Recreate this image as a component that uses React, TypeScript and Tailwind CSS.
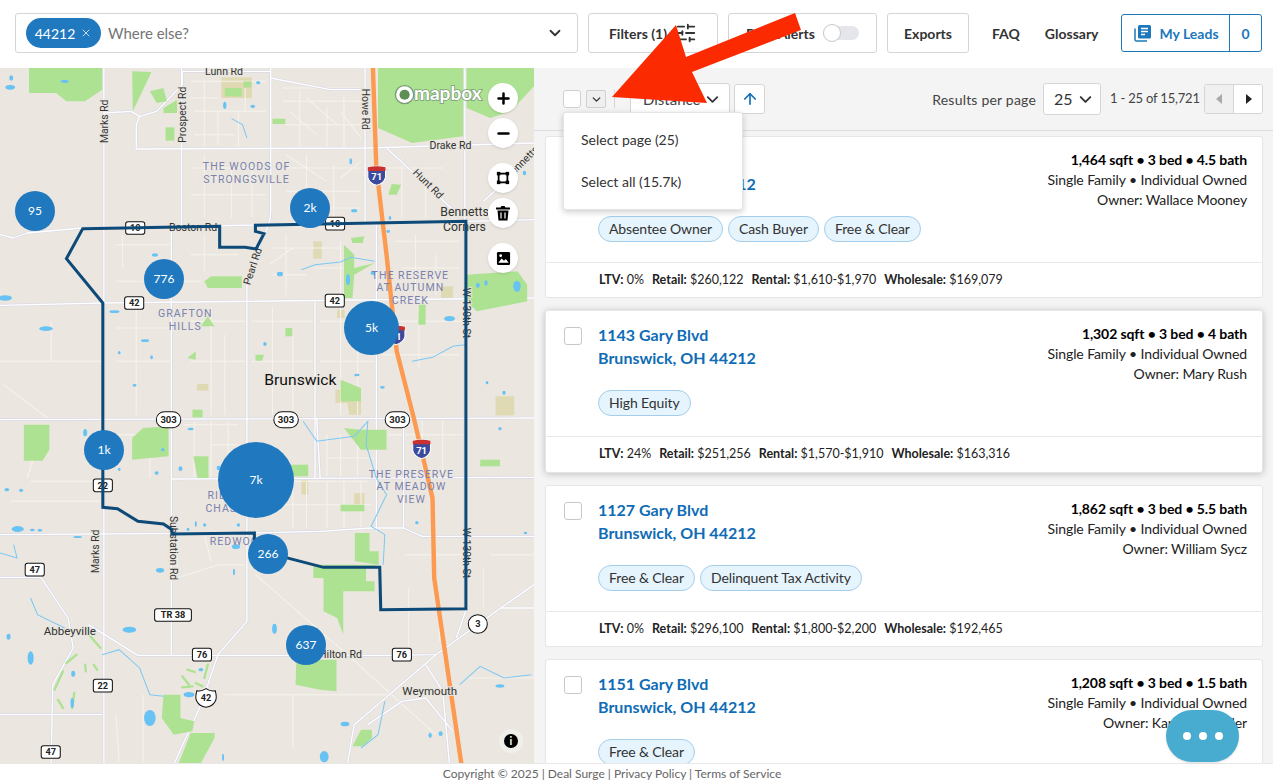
import React from 'react';
import { ChevronDown, X, SlidersHorizontal, Plus, Minus, ArrowUp } from 'lucide-react';

const listings = [
  {
    street: '1119 Gary Blvd',
    city: 'Brunswick, OH 44212',
    size: '1,464 sqft • 3 bed • 4.5 bath',
    owner: 'Wallace Mooney',
    tags: ['Absentee Owner', 'Cash Buyer', 'Free & Clear'],
    ltv: '0%',
    retail: '$260,122',
    rental: '$1,610-$1,970',
    wholesale: '$169,079',
  },
  {
    street: '1143 Gary Blvd',
    city: 'Brunswick, OH 44212',
    size: '1,302 sqft • 3 bed • 4 bath',
    owner: 'Mary Rush',
    tags: ['High Equity'],
    ltv: '24%',
    retail: '$251,256',
    rental: '$1,570-$1,910',
    wholesale: '$163,316',
    raised: true,
  },
  {
    street: '1127 Gary Blvd',
    city: 'Brunswick, OH 44212',
    size: '1,862 sqft • 3 bed • 5.5 bath',
    owner: 'William Sycz',
    tags: ['Free & Clear', 'Delinquent Tax Activity'],
    ltv: '0%',
    retail: '$296,100',
    rental: '$1,800-$2,200',
    wholesale: '$192,465',
  },
  {
    street: '1151 Gary Blvd',
    city: 'Brunswick, OH 44212',
    size: '1,208 sqft • 3 bed • 1.5 bath',
    owner: 'Karen Schindler',
    tags: ['Free & Clear'],
    ltv: '0%',
    retail: '$180,400',
    rental: '$1,300-$1,600',
    wholesale: '$117,260',
  },
];

const clusters = [
  { label: '95', cls: 'left-[15px] top-[123px] w-[40px] h-[40px]' },
  { label: '2k', cls: 'left-[290px] top-[120px] w-[40px] h-[40px]' },
  { label: '776', cls: 'left-[144px] top-[191px] w-[40px] h-[40px]' },
  { label: '5k', cls: 'left-[344px] top-[233px] w-[55px] h-[54px]' },
  { label: '1k', cls: 'left-[84px] top-[362px] w-[40px] h-[40px]' },
  { label: '7k', cls: 'left-[218px] top-[374px] w-[76px] h-[76px]' },
  { label: '266', cls: 'left-[248px] top-[466px] w-[40px] h-[40px]' },
  { label: '637', cls: 'left-[286px] top-[557px] w-[40px] h-[40px]' },
];

// everything inside the map drawing is in a 1568 x 2085 space (lower half shifted by 1050)
const majorRoads = [
  'M305 0V2090',
  'M533 0V470L503 480V1050V1760',
  'M795 0V430Q795 470 770 510L725 650V1660L640 1760L590 1910L510 2090',
  'M1072 0V470',
  'M1105 470V1390',
  'M925 700V1230',
  'M1365 0V1620',
  'M0 500L40 510L80 495L240 480L1370 460L1568 455',
  'M400 243L1075 240L1568 225',
  'M400 243V170L410 145L385 130L305 135M410 145L460 130L535 50V10H795M795 30L970 65H1075',
  'M0 712L300 705L1568 690',
  'M0 1055L1568 1050',
  'M505 1233L1568 1228',
  'M0 1400L720 1395L940 1390L1090 1380H1185L1240 1405H1568',
  'M260 1670L405 1762H1130L1280 1760L1470 1620H1568',
  'M1020 2090L1040 1970L1280 1760',
  'M0 1528H120L200 1650L215 1740L155 1850L150 2090',
  'M1568 1550L1470 1620',
  'M1370 1620L1340 1710',
  'M0 1940H300',
  'M1135 240L1330 425M1420 400L1568 260',
  'M1185 1050V1380',
  'M930 1050L940 1230',
  'M1250 1790L1300 1870L1320 2090M1250 1890L1330 1990',
  'M1080 1970L1180 1900L1250 1890',
];

const minorRoads =
  'M560 40H780M560 90H640M570 130H780M600 40V240M700 130V240M830 100H1060M880 70V240M960 120V240M1010 80V240M840 170H1060' +
  'M560 300H780M600 260V450M680 300V450M560 380H780M840 300H1060M900 260V450M980 290V450M840 370H1060M1180 270V450M1250 320V450' +
  'M340 530H500M360 500V600M560 560H700M600 500V610M800 540H1000M840 500V680M920 600H1050M1000 520V680M1160 520H1350M1220 500V680' +
  'M340 780H500M400 720V1040M340 880H500M560 760H720M620 720V1040M560 880H720M660 800V1040M740 760H920M800 720V1040M740 880H920M860 800V1040' +
  'M940 760H1100M1000 720V1040M940 880H1100M1050 800V1040M1120 760H1360M1230 720V900M1120 860H1350M150 760V880H300M0 880H190M10 950L140 1050' +
  'M540 1070H700M570 1060V1230M620 1060V1230M670 1060V1230M830 1240H1080M860 1240V1380M900 1240V1380M960 1240V1380M1010 1240V1380M1060 1240V1380M830 1310H1090' +
  'M340 1100H500M90 1240H300M120 1100L80 1230M30 1300H300M520 1530L640 1490H720M520 1400V1500M750 1520L1020 1760L1280 2000' +
  'M600 1400L620 1480M1190 1460H1360M1200 1560V1740M1290 1640V1720M660 1880H1150M860 1880V2040M420 1880V2090M340 1940L350 2080' +
  'M1370 1830H1568M1440 1460H1568M1420 1500V1620' +
  'M830 60H1060M850 130L930 200M900 90L990 170M1000 130L1060 210M570 200H690M640 130V230M720 60V130' +
  'M840 260L960 340M1000 330L1060 280M1120 300H1300M620 330H760M740 300V450M840 420H1060' +
  'M790 590L860 540M800 620H900M1180 600H1350M1280 560V680M450 640H590M340 640H420' +
  'M440 1100V1230M620 1130H700M1140 1100H1360M1240 1060V1230M1300 1060V1230M960 1100V1230M1000 1100V1230M1050 1130V1230M960 1170H1100';

const golf =
  'M265 1705L295 1740M225 1760L195 1785M185 1810L160 1865M170 1895L185 1920M218 1875L212 1920M250 1790L252 1810M275 1790L285 1805' +
  'M610 1790L600 1830M550 1805L572 1812M535 1825L555 1850M535 1858L565 1855M575 1845L595 1855';

const parks = [
  'M85 0H300V65L250 100H195L165 75H85Z',
  'M388 10L445 12L390 130Z',
  'M440 70L480 60L490 100L460 105Z',
  'M480 120L520 95V135H480Z',
  'M1110 0H1360V205L1210 225L1110 180Z',
  'M1370 0H1568V55L1500 130L1440 150L1370 120Z',
  'M660 60H710V85H660Z',
  'M715 40H738V58H715Z',
  'M800 152H838V168H800Z',
  'M486 178H512V218H486Z',
  'M1140 380L1150 348L1178 350L1165 380Z',
  'M1030 510L1070 505L1065 525L1035 525Z',
  'M600 640L620 625H710V660H610Z',
  'M1010 530L1040 560V600L1100 585L1040 620L1035 690H1010Z',
  'M1370 620L1520 610L1548 650V700L1400 730L1370 700Z',
  'M1230 710L1250 710L1250 770L1228 770Z',
  'M590 775L610 745L630 775Z',
  'M838 780H858V805H838Z',
  'M750 860L775 860L770 878H750Z',
  'M550 870L575 850V875Z',
  'M1000 935L1060 960V1000H1000Z',
  'M565 1025H595V1048H565Z',
  'M70 1070H145V1145L125 1178H70Z',
  'M388 1110L420 1080L495 1075V1165L388 1175Z',
  'M568 1165H612V1230H580Z',
  'M855 1190H905V1225H855Z',
  'M1010 1080L1060 1085H1135V1145H1060Z',
  'M1410 1175H1468V1195H1410Z',
  'M1000 1310H1070V1330H1000Z',
  'M1042 1395H1085V1450H1112V1490H920V1530H950V1630L990 1650L1008 1700V1570H1100V1540H1075V1500L1112 1490L1042 1480Z',
  'M870 1775H988V1870L940 1865L868 1850Z',
  'M480 1880H530V1950L570 1960L565 1990L510 2000L475 1950Z',
  'M525 2085L560 1995H630V2010L590 2085Z',
  'M1035 2035L1060 1985H1092V2010L1065 2035Z',
];

const tans = [
  'M650 28H740V90H650Z',
  'M920 520H945V572H920Z',
  'M1295 655H1330V690H1295Z',
  'M990 725H1012V750H990Z',
  'M578 948H612V968H578Z',
  'M985 965H1060V1040H1025L1020 1005H985Z',
  'M1455 985H1510V1042H1455Z',
  'M885 1235H905V1280H885Z',
  'M1040 1275H1070V1310H1040Z',
];

const waters: [number, number, number, number][] = [
  [33, 30, 6, 8], [30, 58, 14, 7], [190, 40, 12, 5], [660, 112, 5, 11], [742, 115, 7, 5], [758, 44, 6, 5],
  [1030, 280, 4, 9], [1040, 428, 9, 5], [1140, 490, 5, 5], [1145, 450, 4, 6], [455, 561, 9, 5], [15, 690, 20, 8],
  [336, 731, 15, 4], [135, 782, 20, 7], [426, 818, 12, 4], [350, 854, 4, 5], [445, 868, 4, 6], [822, 618, 9, 7],
  [1022, 635, 6, 16], [1095, 615, 7, 6], [1403, 652, 6, 8], [1427, 645, 5, 8], [1518, 655, 11, 17], [1320, 752, 16, 8],
  [778, 828, 5, 6], [395, 952, 6, 4], [1048, 921, 8, 4], [1123, 958, 7, 4], [1430, 944, 4, 5], [1480, 974, 5, 6],
  [1540, 315, 5, 7], [20, 1265, 7, 5], [62, 1267, 6, 5], [250, 1094, 6, 11], [350, 1204, 4, 5], [460, 1215, 6, 5],
  [530, 1202, 6, 7], [478, 1145, 5, 5], [642, 1200, 6, 7], [560, 1083, 9, 4], [52, 1383, 18, 9], [95, 1386, 7, 4],
  [117, 1387, 7, 4], [228, 1407, 13, 3], [575, 1368, 3, 9], [601, 1371, 5, 5], [552, 1384, 4, 5], [700, 1371, 5, 5],
  [693, 1436, 12, 7], [470, 1507, 12, 7], [687, 1512, 3, 10], [806, 1682, 7, 15], [380, 1685, 20, 9], [25, 1706, 6, 9],
  [90, 1770, 9, 20], [215, 1817, 6, 9], [212, 1905, 5, 15], [440, 1950, 17, 24], [590, 1805, 7, 5], [555, 1880, 16, 8],
  [1013, 1968, 13, 7], [1263, 2002, 5, 8], [1294, 1997, 6, 7], [952, 2066, 13, 17], [1468, 1854, 13, 5], [655, 2068, 3, 11],
  [1224, 1364, 5, 5], [1543, 1395, 5, 4], [1468, 1082, 5, 5],
];

const streams = [
  'M680 152L712 170L725 210',
  'M885 605L925 590L1000 582L1030 568L1100 580',
  'M1210 880L1270 868L1330 835L1365 830',
  'M890 1060L930 1120L1040 1105L1080 1060L1075 1130L1105 1230L1135 1280L1090 1375L1130 1400L1125 1490',
  'M0 1455L50 1470L40 1430M90 1590L110 1640L190 1680M300 1760L350 1745L410 1800L440 1880L480 1885',
  'M1130 1900L1110 2000L1060 2040M1350 1850L1410 1795L1480 1830L1560 1820',
];

const shields: [string, number, number, number][] = [
  ['10', 397, 480, 56], ['10', 984, 467, 56], ['42', 394, 705, 56], ['42', 983, 698, 56],
  ['22', 302, 1252, 56], ['22', 302, 1853, 56], ['47', 102, 1505, 56], ['47', 149, 2052, 56],
  ['TR 38', 508, 1641, 108], ['76', 593, 1760, 56], ['76', 1180, 1760, 56],
];

function RoadPaths() {
  return (
    <>
      <path d={minorRoads} fill="none" stroke="#f6f3ed" strokeWidth="3" />
      {majorRoads.map((d, i) => (
        <path key={i} d={d} fill="none" stroke="#d9d9e6" strokeWidth="8" strokeLinejoin="round" />
      ))}
      {majorRoads.map((d, i) => (
        <path key={i} d={d} fill="none" stroke="#ffffff" strokeWidth="4" strokeLinejoin="round" />
      ))}
    </>
  );
}

function Interstate({ x, y }: { x: number; y: number }) {
  return (
    <g transform={`translate(${x} ${y})`}>
      <path d="M-26 -24Q0 -30 26 -24V6Q22 24 0 30Q-22 24 -26 6Z" fill="#3c4a9e" stroke="#fff" strokeWidth="3" />
      <path d="M-26 -24Q0 -30 26 -24V-13H-26Z" fill="#c9312f" />
      <text x="0" y="15" textAnchor="middle" fontSize="28" fontWeight="700" fill="#fff" fontFamily="Roboto, sans-serif">
        71
      </text>
    </g>
  );
}

function Oval({ x, y, label }: { x: number; y: number; label: string }) {
  return (
    <g>
      <rect x={x - 36} y={y - 24} width="72" height="48" rx="24" fill="#fff" stroke="#111" strokeWidth="3" />
      <text x={x} y={y + 10} textAnchor="middle" fontSize="28" fontWeight="700" fill="#222" fontFamily="Roboto, sans-serif">
        {label}
      </text>
    </g>
  );
}

function Label({
  x,
  y,
  size = 31,
  fill = '#333',
  rotate,
  spacing,
  children,
}: {
  x: number;
  y: number;
  size?: number;
  fill?: string;
  rotate?: number;
  spacing?: number;
  children: string;
}) {
  return (
    <text
      x={x}
      y={y}
      textAnchor="middle"
      fontSize={size}
      fill={fill}
      letterSpacing={spacing}
      fontFamily="Roboto, sans-serif"
      transform={rotate ? `rotate(${rotate} ${x} ${y})` : undefined}
    >
      {children}
    </text>
  );
}

function MapArt() {
  return (
    <svg viewBox="0 0 1568 2085" preserveAspectRatio="none" className="w-full h-full block">
      <rect width="1568" height="2085" fill="#ebe7e0" />
      {tans.map((d, i) => (
        <path key={i} d={d} fill="#dfd9b4" />
      ))}
      <RoadPaths />
      {parks.map((d, i) => (
        <path key={i} d={d} fill="#aee293" />
      ))}
      <path d={golf} fill="none" stroke="#aee293" strokeWidth="7" strokeLinecap="round" />
      {streams.map((d, i) => (
        <path key={i} d={d} fill="none" stroke="#7cc8f3" strokeWidth="3" />
      ))}
      {waters.map(([cx, cy, rx, ry], i) => (
        <ellipse key={i} cx={cx} cy={cy} rx={rx} ry={ry} fill="#69c2f4" />
      ))}
      <path d="M1095 0L1105 300L1135 560L1165 850L1215 1050L1270 1290L1275 1530L1355 2090" fill="none" stroke="#fb9a50" strokeWidth="13" />

      <g stroke="#e9e6df" strokeWidth="6" style={{ paintOrder: 'stroke' }}>
        <Label x={658} y={22}>Lunn Rd</Label>
        <Label x={317} y={160} rotate={-90}>Marks Rd</Label>
        <Label x={545} y={140} rotate={-90}>Prospect Rd</Label>
        <Label x={1062} y={124} rotate={90}>Howe Rd</Label>
        <Label x={1323} y={244}>Drake Rd</Label>
        <Label x={1250} y={355} rotate={45}>Hunt Rd</Label>
        <Label x={1540} y={290} rotate={-45}>Bennetts</Label>
        <Label x={567} y={488}>Boston Rd</Label>
        <Label x={752} y={598} rotate={-72}>Pearl Rd</Label>
        <Label x={1360} y={735} rotate={90}>W 130th St</Label>
        <Label x={1360} y={1455} rotate={90}>W 130th St</Label>
        <Label x={292} y={1450} rotate={-90}>Marks Rd</Label>
        <Label x={498} y={1440} rotate={90}>Substation Rd</Label>
        <Label x={1000} y={1770}>Hilton Rd</Label>
        <Label x={1364} y={445} size={36}>Bennetts</Label>
        <Label x={1364} y={490} size={36}>Corners</Label>
        <Label x={205} y={1700} size={34}>Abbeyville</Label>
        <Label x={1262} y={1882} size={34}>Weymouth</Label>
        <Label x={882} y={952} size={46} fill="#111">Brunswick</Label>
      </g>

      <g>
        <Label x={724} y={306} fill="#7a82ad" spacing={3}>THE WOODS OF</Label>
        <Label x={724} y={344} fill="#7a82ad" spacing={3}>STRONGSVILLE</Label>
        <Label x={1205} y={632} fill="#7a82ad" spacing={3}>THE RESERVE</Label>
        <Label x={1205} y={670} fill="#7a82ad" spacing={3}>AT AUTUMN</Label>
        <Label x={1205} y={708} fill="#7a82ad" spacing={3}>CREEK</Label>
        <Label x={544} y={747} fill="#7a82ad" spacing={3}>GRAFTON</Label>
        <Label x={544} y={785} fill="#7a82ad" spacing={3}>HILLS</Label>
        <Label x={1208} y={1229} fill="#7a82ad" spacing={3}>THE PRESERVE</Label>
        <Label x={1208} y={1267} fill="#7a82ad" spacing={3}>AT MEADOW</Label>
        <Label x={1208} y={1305} fill="#7a82ad" spacing={3}>VIEW</Label>
        <Label x={660} y={1294} fill="#7a82ad" spacing={3}>RIDGE</Label>
        <Label x={660} y={1332} fill="#7a82ad" spacing={3}>CHASE</Label>
        <Label x={700} y={1432} fill="#7a82ad" spacing={3}>REDWOOD</Label>
      </g>

      {shields.map(([label, x, y, w], i) => (
        <g key={i}>
          <rect x={x - w / 2} y={y - 19} width={w} height="38" rx="7" fill="#fff" stroke="#111" strokeWidth="3" />
          <text x={x} y={y + 10} textAnchor="middle" fontSize="27" fontWeight="700" fill="#222" fontFamily="Roboto, sans-serif">
            {label}
          </text>
        </g>
      ))}
      <Oval x={495} y={1055} label="303" />
      <Oval x={840} y={1055} label="303" />
      <Oval x={1167} y={1055} label="303" />
      <g>
        <ellipse cx="1403" cy="1668" rx="28" ry="28" fill="#fff" stroke="#111" strokeWidth="3" />
        <text x="1403" y="1678" textAnchor="middle" fontSize="27" fontWeight="700" fill="#222" fontFamily="Roboto, sans-serif">
          3
        </text>
      </g>
      <g>
        <path d="M578 1868Q590 1872 605 1862Q620 1872 632 1868Q638 1890 632 1900Q625 1915 605 1918Q585 1915 578 1900Q572 1890 578 1868Z" fill="#fff" stroke="#111" strokeWidth="3" />
        <text x="605" y="1900" textAnchor="middle" fontSize="27" fontWeight="700" fill="#222" fontFamily="Roboto, sans-serif">
          42
        </text>
      </g>
      <Interstate x={1106} y={322} />
      <Interstate x={1163} y={800} />
      <Interstate x={1238} y={1142} />

      <path
        d="M243 482L645 475V538H720L752 543L775 497L750 490V472L1368 460V1622L1118 1625L1115 1498H950L787 1455L747 1415V1395L505 1398V1385L480 1368L405 1360L345 1322L302 1318V705L195 572Z"
        fill="none"
        stroke="#0e4a78"
        strokeWidth="9"
        strokeLinejoin="miter"
      />

      <circle cx="1188" cy="80" r="27" fill="#fff" stroke="#7b9d78" strokeWidth="4" />
      <circle cx="1188" cy="80" r="15" fill="#5d8f56" />
      <text
        x="1315"
        y="96"
        textAnchor="middle"
        fontSize="56"
        fontWeight="700"
        fill="#fff"
        stroke="#7b9d78"
        strokeWidth="5"
        fontFamily="Lato, sans-serif"
        style={{ paintOrder: 'stroke' }}
      >
        mapbox
      </text>
    </svg>
  );
}

function MapButton({ children, cls }: { children: React.ReactNode; cls: string }) {
  return (
    <button className={`absolute left-[488px] w-[30px] h-[30px] rounded-full bg-white flex items-center justify-center shadow-sm text-black ${cls}`}>
      {children}
    </button>
  );
}

function MapPanel() {
  return (
    <div className="relative w-[534px] shrink-0 overflow-hidden">
      <MapArt />
      {clusters.map((c) => (
        <div
          key={c.label}
          className={`absolute rounded-full bg-[#2079bf] text-white text-[12px] flex items-center justify-center ${c.cls}`}
        >
          {c.label}
        </div>
      ))}
      <MapButton cls="top-[15px]">
        <Plus size={17} strokeWidth={3.5} />
      </MapButton>
      <MapButton cls="top-[50px]">
        <Minus size={17} strokeWidth={3.5} />
      </MapButton>
      <MapButton cls="top-[95px]">
        <svg width="14" height="14" viewBox="0 0 16 16">
          <rect x="3" y="3" width="10" height="10" fill="none" stroke="#000" strokeWidth="2" />
          <rect x="1" y="1" width="4" height="4" fill="#000" />
          <rect x="11" y="1" width="4" height="4" fill="#000" />
          <rect x="1" y="11" width="4" height="4" fill="#000" />
          <rect x="11" y="11" width="4" height="4" fill="#000" />
        </svg>
      </MapButton>
      <MapButton cls="top-[130px]">
        <svg width="14" height="16" viewBox="0 0 14 16">
          <path d="M0 2.5H4.5L5.5 1H8.5L9.500 2.500H14V4.500H0Z" fill="#000" />
          <path d="M1.500 5.500H12.500L11.500 15.500H2.500Z" fill="#000" />
          <path d="M5 7.500V13.500M9 7.500V13.500" stroke="#fff" strokeWidth="1.200" />
        </svg>
      </MapButton>
      <MapButton cls="top-[175px]">
        <svg width="15" height="15" viewBox="0 0 16 16">
          <rect x="1" y="1" width="14" height="14" rx="1.500" fill="#000" />
          <path d="M2.500 12.500L6 8L8.500 10.500L10.500 8.500L13.500 12.500Z" fill="#fff" />
          <circle cx="5" cy="5" r="1.500" fill="#fff" />
        </svg>
      </MapButton>
      <div className="absolute left-[499px] top-[661px] w-[24px] h-[24px] rounded-full bg-[#f1efea] flex items-center justify-center">
        <div className="w-[14px] h-[14px] rounded-full bg-black text-white text-[11px] font-bold leading-[14px] text-center">i</div>
      </div>
    </div>
  );
}

function ListingCard({ item }: { item: (typeof listings)[number] }) {
  return (
    <div
      className={`h-[162.33px] shrink-0 rounded-[3px] bg-white border border-[#e6e6e6] ${item.raised ? 'shadow-[0_1px_7px_rgba(0,0,0,0.22)]' : ''}`}
    >
      <div className="h-[126px] border-b border-[#e8e8e8] flex pl-[18px] pr-[15px] pt-[12px]">
        <div className="w-[18px] h-[18px] mt-[4px] rounded-[3px] border border-[#c8c8c8] bg-white shrink-0" />
        <div className="ml-[16px] flex-1">
          <div className="text-[16px] leading-[23px] font-bold text-[#0f6cb5]">{item.street}</div>
          <div className="text-[16px] leading-[23px] font-bold text-[#0f6cb5]">{item.city}</div>
          <div className="flex gap-[5px] mt-[21px]">
            {item.tags.map((t) => (
              <span
                key={t}
                className="h-[26px] px-[10px] rounded-[13px] border border-[#a5cdea] bg-[#e5f4fd] text-[14px] tracking-[-0.1px] leading-[24px] text-[#333]"
              >
                {t}
              </span>
            ))}
          </div>
        </div>
        <div className="text-right text-[14px] tracking-[-0.1px] leading-[20px] text-[#222] mt-[1px]">
          <div className="font-bold text-black">{item.size}</div>
          <div>Single Family • Individual Owned</div>
          <div>Owner: {item.owner}</div>
        </div>
      </div>
      <div className="h-[35px] pl-[53px] flex items-center gap-[8px] text-[12.5px] text-[#222]">
        <span>
          <b>LTV:</b> {item.ltv}
        </span>
        <span>
          <b>Retail:</b> {item.retail}
        </span>
        <span>
          <b>Rental:</b> {item.rental}
        </span>
        <span>
          <b>Wholesale:</b> {item.wholesale}
        </span>
      </div>
    </div>
  );
}

function ResultsToolbar() {
  return (
    <div className="h-[63px] shrink-0 border-b border-[#dddde3] flex items-center pl-[29px] pr-[10px]">
      <div className="w-[18px] h-[18px] rounded-[3px] border border-[#cfcfcf] bg-white" />
      <div className="ml-[5px] w-[20px] h-[18px] rounded-[2px] border border-[#cfcfcf] bg-[#efefef] flex items-center justify-center">
        <ChevronDown size={13} strokeWidth={2.5} className="text-[#333]" />
      </div>
      <div className="ml-[8px] w-px h-[18px] bg-[#d5d5d5]" />
      <div className="ml-[15px] w-[100px] h-[32px] rounded-[3px] border border-[#d5d5d5] bg-white flex items-center justify-between pl-[12px] pr-[7px] text-[15px] text-[#444]">
        Distance
        <ChevronDown size={19} strokeWidth={2.2} className="text-[#333]" />
      </div>
      <div className="ml-[4px] w-[31px] h-[30px] rounded-[3px] border border-[#d5d5d5] bg-white flex items-center justify-center">
        <ArrowUp size={18} strokeWidth={2.2} className="text-[#0f6cb5]" />
      </div>
      <div className="ml-auto text-[14px] tracking-[0.2px] text-[#444]">Results per page</div>
      <div className="ml-[7px] w-[58px] h-[32px] rounded-[3px] border border-[#d5d5d5] bg-white flex items-center justify-between pl-[10px] pr-[5px] text-[16px] text-[#333]">
        25
        <ChevronDown size={19} strokeWidth={2.4} className="text-[#333]" />
      </div>
      <div className="ml-[9px] w-[88px] whitespace-nowrap text-[13px] tracking-[-0.2px] text-[#444]">1 - 25 of 15,721</div>
      <div className="ml-[6px] w-[59px] h-[30px] rounded-[3px] border border-[#d5d5d5] flex overflow-hidden">
        <div className="flex-1 bg-[#f0f0f0] flex items-center justify-center border-r border-[#d5d5d5]">
          <svg width="7" height="10" viewBox="0 0 7 10">
            <path d="M6 0V10L0 5Z" fill="#aaa" />
          </svg>
        </div>
        <div className="flex-1 bg-white flex items-center justify-center">
          <svg width="7" height="10" viewBox="0 0 7 10">
            <path d="M1 0V10L7 5Z" fill="#222" />
          </svg>
        </div>
      </div>
    </div>
  );
}

function TopBar() {
  const btn = 'h-[40px] rounded-[3px] border border-[#d5d5d5] bg-white flex items-center justify-center text-[14px] font-bold text-[#333]';
  return (
    <div className="h-[68px] shrink-0 bg-white flex items-center pl-[15px] pr-[11px] pb-[2px]">
      <div className="w-[563px] h-[40px] rounded-[3px] border border-[#d5d5d5] flex items-center pl-[10px] pr-[13px]">
        <span className="h-[30px] w-[75px] rounded-[15px] bg-[#2079bf] text-white text-[14px] flex items-center justify-center gap-[5px]">
          44212
          <X size={12} strokeWidth={1.5} />
        </span>
        <span className="ml-[7px] text-[15px] text-[#757575]">Where else?</span>
        <ChevronDown size={18} strokeWidth={2.4} className="ml-auto text-[#333]" />
      </div>
      <div className={`${btn} ml-[10px] w-[130px] gap-[8px]`}>
        Filters (1)
        <SlidersHorizontal size={22} strokeWidth={2} className="text-[#333]" />
      </div>
      <div className={`${btn} ml-[10px] w-[149px] gap-[8px]`}>
        Deal Alerts
        <span className="relative w-[36px] h-[14px] rounded-full bg-[#e4e6ec]">
          <span className="absolute left-0 -top-[2px] w-[18px] h-[18px] rounded-full bg-white border border-[#c8c8c8]" />
        </span>
      </div>
      <div className={`${btn} ml-[10px] w-[82px]`}>Exports</div>
      <div className="ml-[23px] text-[14px] font-bold text-[#333]">FAQ</div>
      <div className="ml-[25px] text-[14px] font-bold text-[#333]">Glossary</div>
      <div className="ml-auto w-[141px] h-[38px] rounded-[3px] border border-[#1c78bb] flex items-center text-[14px] font-bold text-[#1c78bb]">
        <div className="flex-1 flex items-center justify-center gap-[7px] pl-[2px] border-r border-[#1c78bb] h-full">
          <svg width="18" height="18" viewBox="0 0 18 18">
            <path d="M1 4.500V15.500Q1 17 2.500 17H13" fill="none" stroke="#1c78bb" strokeWidth="1.500" />
            <rect x="4" y="1" width="13" height="13.500" rx="1.500" fill="#1c78bb" />
            <path d="M7 4.500H14M7 7.500H14M7 10.500H11" stroke="#fff" strokeWidth="1.400" />
          </svg>
          My Leads
        </div>
        <div className="w-[31px] text-center">0</div>
      </div>
    </div>
  );
}

export default function App() {
  return (
    <div className="relative w-[1273px] h-[781px] overflow-hidden bg-white flex flex-col font-['Lato','Liberation_Sans',sans-serif]">
      <TopBar />
      <div className="flex flex-1 min-h-0">
        <MapPanel />
        <div className="flex-1 min-w-0 bg-[#f4f4f4] flex flex-col">
          <ResultsToolbar />
          <div className="flex flex-col gap-[12px] pt-[5px] pl-[11px] pr-[10px] overflow-hidden">
            {listings.map((item) => (
              <ListingCard key={item.street} item={item} />
            ))}
          </div>
        </div>
      </div>
      <div className="h-[18px] shrink-0 bg-white border-t border-[#e8e8e8] text-center text-[12px] leading-[14px] pt-[3px] text-[#666]">
        <span className="ml-[-49px]">Copyright © 2025 | Deal Surge | Privacy Policy | Terms of Service</span>
      </div>

      {/* overlays */}
      <div className="absolute left-[563px] top-[112px] w-[180px] h-[98px] rounded-[3px] bg-white border border-[#e4e4e4] shadow-[0_2px_6px_rgba(0,0,0,0.2)] text-[14px] text-[#333] pl-[17px]">
        <div className="h-[52px] flex items-center">Select page (25)</div>
        <div className="h-[33px] flex items-center">Select all (15.7k)</div>
      </div>
      <div className="absolute left-[1166px] top-[710px] w-[73px] h-[52px] rounded-[26px] bg-[#48abd0] flex items-center justify-center gap-[8px] shadow-sm">
        <span className="w-[8px] h-[8px] rounded-full bg-white" />
        <span className="w-[8px] h-[8px] rounded-full bg-white" />
        <span className="w-[8px] h-[8px] rounded-full bg-white" />
      </div>
      <svg className="absolute left-0 top-0 pointer-events-none" width="1273" height="781">
        <polygon points="612,97 676,25 686,57 795,13 801,30 692,72 707,103" fill="#fb2a00" />
      </svg>
    </div>
  );
}
